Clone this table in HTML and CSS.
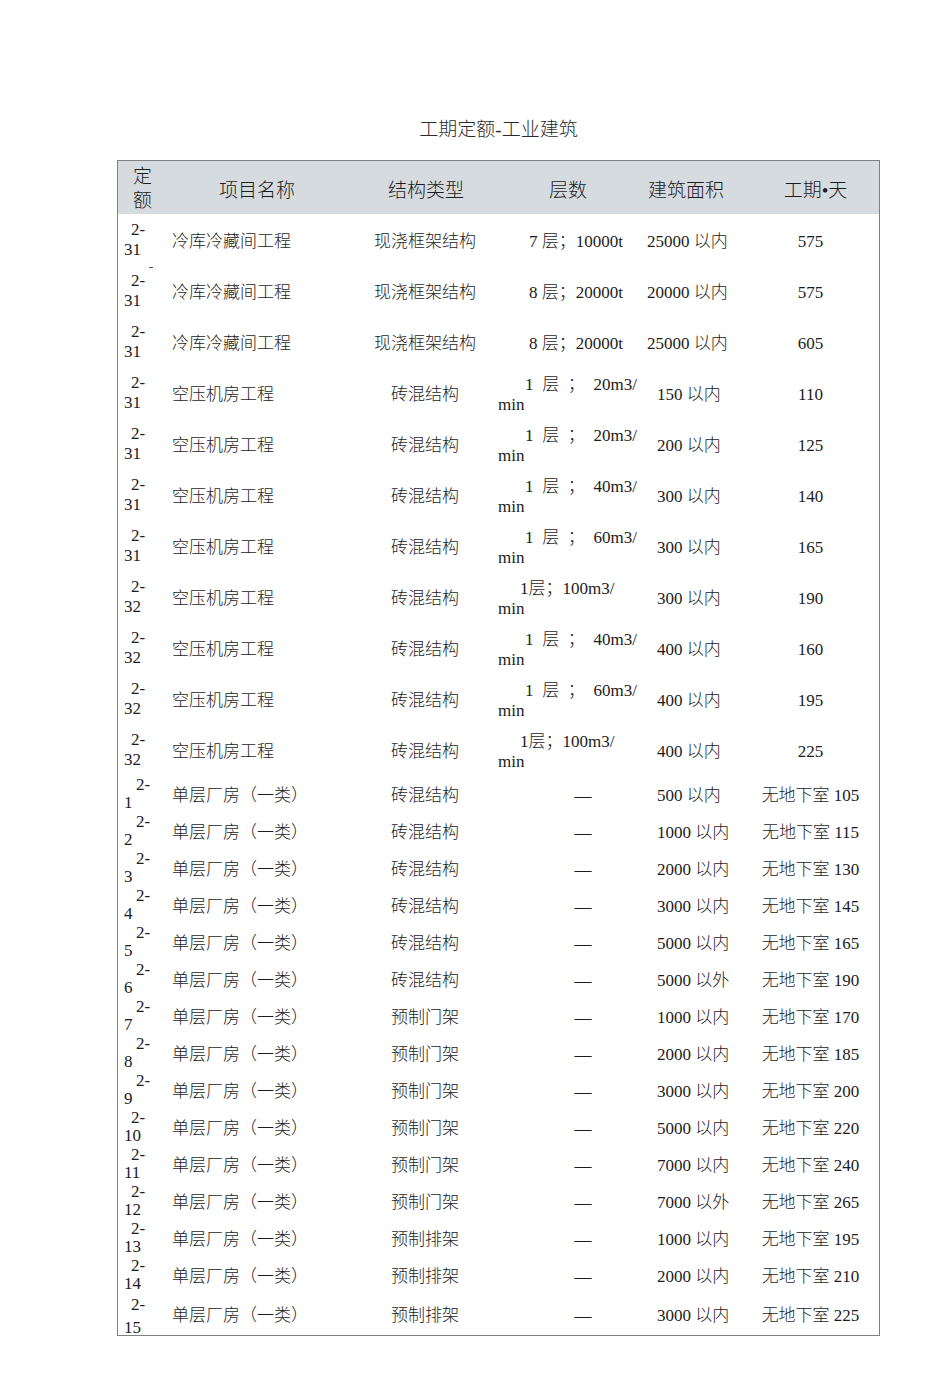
FILE: index.html
```html
<!DOCTYPE html>
<html lang="zh-CN">
<head>
<meta charset="utf-8">
<title>工期定额-工业建筑</title>
<link rel="stylesheet" href="styles.css">
</head>
<body>
<div class="page">
  <h1 class="title">工期定额-工业建筑</h1>
  <table class="quota">
    <colgroup>
      <col class="c1"><col class="c2"><col class="c3"><col class="c4"><col class="c5"><col class="c6">
    </colgroup>
    <thead>
      <tr>
        <th class="h-code"><span class="hl">定</span><span class="hl">额</span></th>
        <th class="h-name">项目名称</th>
        <th class="h-struct">结构类型</th>
        <th>层数</th>
        <th class="h-area">建筑面积</th>
        <th class="h-days">工期•天</th>
      </tr>
    </thead>
    <tbody>
      <tr class="tall">
        <td class="code"><div class="cbox"><span class="l1">2-</span><span class="l2">31</span></div></td>
        <td class="name">冷库冷藏间工程</td>
        <td class="struct">现浇框架结构</td>
        <td class="floors"><span class="f-t">7 层；10000t</span></td>
        <td class="area wide">25000 以内</td>
        <td class="days">575</td>
      </tr>
      <tr class="tall">
        <td class="code"><div class="cbox mark"><span class="l1">2-</span><span class="l2">31</span></div></td>
        <td class="name">冷库冷藏间工程</td>
        <td class="struct">现浇框架结构</td>
        <td class="floors"><span class="f-t">8 层；20000t</span></td>
        <td class="area wide">20000 以内</td>
        <td class="days">575</td>
      </tr>
      <tr class="tall">
        <td class="code"><div class="cbox"><span class="l1">2-</span><span class="l2">31</span></div></td>
        <td class="name">冷库冷藏间工程</td>
        <td class="struct">现浇框架结构</td>
        <td class="floors"><span class="f-t">8 层；20000t</span></td>
        <td class="area wide">25000 以内</td>
        <td class="days">605</td>
      </tr>
      <tr class="tall">
        <td class="code"><div class="cbox"><span class="l1">2-</span><span class="l2">31</span></div></td>
        <td class="name">空压机房工程</td>
        <td class="struct">砖混结构</td>
        <td class="floors"><span class="f-j"><span>1</span><span>层</span><span>；</span><span>20m3/</span></span><span class="f-2">min</span></td>
        <td class="area">150 以内</td>
        <td class="days">110</td>
      </tr>
      <tr class="tall">
        <td class="code"><div class="cbox"><span class="l1">2-</span><span class="l2">31</span></div></td>
        <td class="name">空压机房工程</td>
        <td class="struct">砖混结构</td>
        <td class="floors"><span class="f-j"><span>1</span><span>层</span><span>；</span><span>20m3/</span></span><span class="f-2">min</span></td>
        <td class="area">200 以内</td>
        <td class="days">125</td>
      </tr>
      <tr class="tall">
        <td class="code"><div class="cbox"><span class="l1">2-</span><span class="l2">31</span></div></td>
        <td class="name">空压机房工程</td>
        <td class="struct">砖混结构</td>
        <td class="floors"><span class="f-j"><span>1</span><span>层</span><span>；</span><span>40m3/</span></span><span class="f-2">min</span></td>
        <td class="area">300 以内</td>
        <td class="days">140</td>
      </tr>
      <tr class="tall">
        <td class="code"><div class="cbox"><span class="l1">2-</span><span class="l2">31</span></div></td>
        <td class="name">空压机房工程</td>
        <td class="struct">砖混结构</td>
        <td class="floors"><span class="f-j"><span>1</span><span>层</span><span>；</span><span>60m3/</span></span><span class="f-2">min</span></td>
        <td class="area">300 以内</td>
        <td class="days">165</td>
      </tr>
      <tr class="tall">
        <td class="code"><div class="cbox"><span class="l1">2-</span><span class="l2">32</span></div></td>
        <td class="name">空压机房工程</td>
        <td class="struct">砖混结构</td>
        <td class="floors"><span class="f-n">1层；100m3/</span><span class="f-2">min</span></td>
        <td class="area">300 以内</td>
        <td class="days">190</td>
      </tr>
      <tr class="tall">
        <td class="code"><div class="cbox"><span class="l1">2-</span><span class="l2">32</span></div></td>
        <td class="name">空压机房工程</td>
        <td class="struct">砖混结构</td>
        <td class="floors"><span class="f-j"><span>1</span><span>层</span><span>；</span><span>40m3/</span></span><span class="f-2">min</span></td>
        <td class="area">400 以内</td>
        <td class="days">160</td>
      </tr>
      <tr class="tall">
        <td class="code"><div class="cbox"><span class="l1">2-</span><span class="l2">32</span></div></td>
        <td class="name">空压机房工程</td>
        <td class="struct">砖混结构</td>
        <td class="floors"><span class="f-j"><span>1</span><span>层</span><span>；</span><span>60m3/</span></span><span class="f-2">min</span></td>
        <td class="area">400 以内</td>
        <td class="days">195</td>
      </tr>
      <tr class="tall">
        <td class="code"><div class="cbox"><span class="l1">2-</span><span class="l2">32</span></div></td>
        <td class="name">空压机房工程</td>
        <td class="struct">砖混结构</td>
        <td class="floors"><span class="f-n">1层；100m3/</span><span class="f-2">min</span></td>
        <td class="area">400 以内</td>
        <td class="days">225</td>
      </tr>

      <tr class="short">
        <td class="code"><div class="cbox one"><span class="l1">2-</span><span class="l2">1</span></div></td>
        <td class="name">单层厂房（一类）</td>
        <td class="struct">砖混结构</td>
        <td class="floors dash">—</td>
        <td class="area">500 以内</td>
        <td class="days">无地下室 105</td>
      </tr>
      <tr class="short">
        <td class="code"><div class="cbox one"><span class="l1">2-</span><span class="l2">2</span></div></td>
        <td class="name">单层厂房（一类）</td>
        <td class="struct">砖混结构</td>
        <td class="floors dash">—</td>
        <td class="area">1000 以内</td>
        <td class="days">无地下室 115</td>
      </tr>
      <tr class="short">
        <td class="code"><div class="cbox one"><span class="l1">2-</span><span class="l2">3</span></div></td>
        <td class="name">单层厂房（一类）</td>
        <td class="struct">砖混结构</td>
        <td class="floors dash">—</td>
        <td class="area">2000 以内</td>
        <td class="days">无地下室 130</td>
      </tr>
      <tr class="short">
        <td class="code"><div class="cbox one"><span class="l1">2-</span><span class="l2">4</span></div></td>
        <td class="name">单层厂房（一类）</td>
        <td class="struct">砖混结构</td>
        <td class="floors dash">—</td>
        <td class="area">3000 以内</td>
        <td class="days">无地下室 145</td>
      </tr>
      <tr class="short">
        <td class="code"><div class="cbox one"><span class="l1">2-</span><span class="l2">5</span></div></td>
        <td class="name">单层厂房（一类）</td>
        <td class="struct">砖混结构</td>
        <td class="floors dash">—</td>
        <td class="area">5000 以内</td>
        <td class="days">无地下室 165</td>
      </tr>
      <tr class="short">
        <td class="code"><div class="cbox one"><span class="l1">2-</span><span class="l2">6</span></div></td>
        <td class="name">单层厂房（一类）</td>
        <td class="struct">砖混结构</td>
        <td class="floors dash">—</td>
        <td class="area">5000 以外</td>
        <td class="days">无地下室 190</td>
      </tr>
      <tr class="short">
        <td class="code"><div class="cbox one"><span class="l1">2-</span><span class="l2">7</span></div></td>
        <td class="name">单层厂房（一类）</td>
        <td class="struct">预制门架</td>
        <td class="floors dash">—</td>
        <td class="area">1000 以内</td>
        <td class="days">无地下室 170</td>
      </tr>
      <tr class="short">
        <td class="code"><div class="cbox one"><span class="l1">2-</span><span class="l2">8</span></div></td>
        <td class="name">单层厂房（一类）</td>
        <td class="struct">预制门架</td>
        <td class="floors dash">—</td>
        <td class="area">2000 以内</td>
        <td class="days">无地下室 185</td>
      </tr>
      <tr class="short">
        <td class="code"><div class="cbox one"><span class="l1">2-</span><span class="l2">9</span></div></td>
        <td class="name">单层厂房（一类）</td>
        <td class="struct">预制门架</td>
        <td class="floors dash">—</td>
        <td class="area">3000 以内</td>
        <td class="days">无地下室 200</td>
      </tr>
      <tr class="short">
        <td class="code"><div class="cbox"><span class="l1">2-</span><span class="l2">10</span></div></td>
        <td class="name">单层厂房（一类）</td>
        <td class="struct">预制门架</td>
        <td class="floors dash">—</td>
        <td class="area">5000 以内</td>
        <td class="days">无地下室 220</td>
      </tr>
      <tr class="short">
        <td class="code"><div class="cbox"><span class="l1">2-</span><span class="l2">11</span></div></td>
        <td class="name">单层厂房（一类）</td>
        <td class="struct">预制门架</td>
        <td class="floors dash">—</td>
        <td class="area">7000 以内</td>
        <td class="days">无地下室 240</td>
      </tr>
      <tr class="short">
        <td class="code"><div class="cbox"><span class="l1">2-</span><span class="l2">12</span></div></td>
        <td class="name">单层厂房（一类）</td>
        <td class="struct">预制门架</td>
        <td class="floors dash">—</td>
        <td class="area">7000 以外</td>
        <td class="days">无地下室 265</td>
      </tr>
      <tr class="short">
        <td class="code"><div class="cbox"><span class="l1">2-</span><span class="l2">13</span></div></td>
        <td class="name">单层厂房（一类）</td>
        <td class="struct">预制排架</td>
        <td class="floors dash">—</td>
        <td class="area">1000 以内</td>
        <td class="days">无地下室 195</td>
      </tr>
      <tr class="short">
        <td class="code"><div class="cbox"><span class="l1">2-</span><span class="l2">14</span></div></td>
        <td class="name">单层厂房（一类）</td>
        <td class="struct">预制排架</td>
        <td class="floors dash">—</td>
        <td class="area">2000 以内</td>
        <td class="days">无地下室 210</td>
      </tr>
      <tr class="last">
        <td class="code"><div class="cbox"><span class="l1">2-</span><span class="l2">15</span></div></td>
        <td class="name">单层厂房（一类）</td>
        <td class="struct">预制排架</td>
        <td class="floors dash">—</td>
        <td class="area">3000 以内</td>
        <td class="days">无地下室 225</td>
      </tr>
    </tbody>
  </table>
</div>
</body>
</html>
```

FILE: styles.css
```css
html, body {
  margin: 0;
  padding: 0;
  background: #ffffff;
}

body {
  color: #1c1c1c;
  font-family: "Liberation Serif", "Noto Sans CJK SC", serif;
}

.page {
  width: 763px;
  padding: 118px 0 40px 117px;
}

.title {
  margin: 0 0 18px;
  font-size: 19px;
  line-height: 24px;
  font-weight: 300;
  text-align: center;
  color: #2a2a2a;
}

.quota {
  width: 763px;
  border: 1px solid #808080;
  border-collapse: separate;
  border-spacing: 0;
  table-layout: fixed;
  font-size: 17px;
  font-weight: 300;
}

.c1 { width: 42px; }
.c2 { width: 190px; }
.c3 { width: 146px; }
.c4 { width: 144px; }
.c5 { width: 105px; }
.c6 { width: 134px; }

.quota th {
  height: 53px;
  padding: 7px 0 0;
  box-sizing: border-box;
  background: #d6dbe0;
  font-size: 19px;
  font-weight: 300;
  line-height: 24px;
  text-align: center;
  vertical-align: middle;
}

.quota th.h-code {
  padding: 2px 0 0 7px;
}

.hl {
  display: block;
}

.quota th.h-name { padding-left: 4px; }
.quota th.h-struct { padding-left: 6px; }
.quota th.h-area { padding-right: 13px; }
.quota th.h-days { padding-left: 7px; }

.quota td {
  box-sizing: border-box;
  padding: 4px 0 0;
  line-height: 20px;
  vertical-align: middle;
  white-space: nowrap;
}

.tall td { height: 51px; }
.short td { height: 37px; }
.last td { height: 42px; }

.quota td.code {
  vertical-align: top;
  padding: 0;
}

.cbox {
  position: relative;
  box-sizing: border-box;
  padding-left: 6px;
}

.cbox .l1,
.cbox .l2 {
  display: block;
}

.cbox .l1 { text-indent: 7px; }

.tall .cbox { height: 51px; padding-top: 6px; }
.short .cbox { height: 37px; padding-top: 1px; line-height: 18px; }
.last .cbox { height: 42px; line-height: 23px; }

.cbox.one .l1 { text-indent: 12px; }

.cbox.mark::before {
  content: "";
  position: absolute;
  left: 31px;
  top: 2px;
  width: 4px;
  height: 1px;
  background: #555;
}

.quota td.name {
  padding-left: 12px;
}

.quota td.struct {
  text-align: center;
  padding-left: 4px;
}

.quota td.floors {
  padding-left: 2px;
}

.f-t {
  display: block;
  padding-left: 31px;
}

.f-j {
  display: flex;
  justify-content: space-between;
  margin-left: 27px;
  width: 112px;
}

.f-n {
  display: block;
  padding-left: 22px;
}

.f-2 {
  display: block;
}

.quota td.dash {
  text-align: center;
  padding-left: 30px;
}

.quota td.area {
  padding-left: 17px;
}

.quota td.area.wide {
  padding-left: 7px;
}

.quota td.days {
  text-align: center;
  padding-right: 3px;
}
```
